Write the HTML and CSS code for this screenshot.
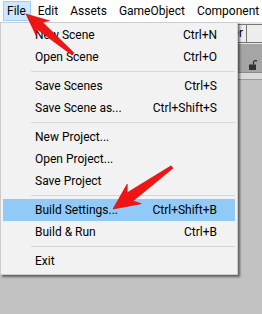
FILE: index.html
```html
<!DOCTYPE html>
<html lang="en">
<head>
    <meta charset="UTF-8">
    <meta name="viewport" content="width=device-width, initial-scale=1.0">
    <title>File Menu</title>
    <link rel="stylesheet" href="styles.css">
</head>
<body>
    <div id="editor">
        <div class="menubar">
            <span class="menubar-item active">File</span>
            <span class="menubar-item">Edit</span>
            <span class="menubar-item">Assets</span>
            <span class="menubar-item">GameObject</span>
            <span class="menubar-item">Component</span>
        </div>

        <div class="toolbar">
            <span class="tool-button">Center</span>
            <span class="tool-button empty"></span>
        </div>

        <div class="panel-tabs">
            <svg class="lock" width="8" height="10" viewBox="0 0 8 10">
                <path d="M4.5 4.5V2.5a2 2 0 0 1 3.5-1.3" fill="none" stroke="#333" stroke-width="1.3"/>
                <rect x="0" y="4.5" width="7" height="5.5" fill="#333"/>
            </svg>
        </div>
        <div class="panel-toolbar"></div>
        <div class="panel-body"></div>
    </div>

    <!-- the open File menu -->
    <div class="menu">
        <div class="menu-item"><span>New Scene</span><span class="shortcut">Ctrl+N</span></div>
        <div class="menu-item"><span>Open Scene</span><span class="shortcut">Ctrl+O</span></div>
        <div class="separator"></div>
        <div class="menu-item"><span>Save Scenes</span><span class="shortcut">Ctrl+S</span></div>
        <div class="menu-item"><span>Save Scene as...</span><span class="shortcut">Ctrl+Shift+S</span></div>
        <div class="separator"></div>
        <div class="menu-item"><span>New Project...</span></div>
        <div class="menu-item"><span>Open Project...</span></div>
        <div class="menu-item"><span>Save Project</span></div>
        <div class="separator"></div>
        <div class="menu-item hover"><span>Build Settings...</span><span class="shortcut">Ctrl+Shift+B</span></div>
        <div class="menu-item"><span>Build &amp; Run</span><span class="shortcut">Ctrl+B</span></div>
        <div class="separator"></div>
        <div class="menu-item"><span>Exit</span></div>
    </div>

    <!-- red annotation arrows -->
    <svg class="arrows" width="262" height="314" viewBox="0 0 262 314">
        <polygon points="26,14 49.3,20.7 42.6,22.3 74,52.9 72,55.1 36.8,29.1 36.3,35.9"/>
        <polygon points="113,209 141.2,203.7 133,200.9 172.9,168.2 171.1,165.8 127.2,192.7 127.2,184.1"/>
    </svg>
</body>
</html>
```

FILE: styles.css
```css
body {
    margin: 0;
    padding: 0;
    width: 262px;
    height: 314px;
    overflow: hidden;
    background: #c2c2c2;
    font-family: Roboto, sans-serif;
    font-size: 12px;
    color: #000;
    position: relative;
}

#editor {
    display: flex;
    flex-direction: column;
}

.menubar {
    height: 22px;
    background: #fff;
    display: flex;
    align-items: center;
    padding-left: 3px;
    white-space: nowrap;
}

.menubar-item {
    height: 18px;
    line-height: 18px;
    padding: 0 4px 0 3px;
    margin-right: 3px;
    border: 1px solid transparent;
}

.menubar-item.active {
    background: #cce8ff;
    border-color: #99d1ff;
}

.toolbar {
    height: 22px;
    background: #e6e6e6;
    display: flex;
    align-items: flex-end;
    padding-left: 200px;
}

.tool-button {
    height: 17px;
    line-height: 17px;
    width: 42px;
    padding-right: 3px;
    text-align: right;
    background: #ededed;
    border: 1px solid #777;
    font-size: 12px;
    margin-bottom: 1px;
    flex-shrink: 0;
}

.tool-button.empty {
    border-left: none;
}

.panel-tabs {
    height: 28px;
    background: #a5a5a5;
    display: flex;
    justify-content: flex-end;
    align-items: flex-end;
    padding-right: 5px;
    box-sizing: border-box;
    padding-bottom: 2px;
}

.panel-toolbar {
    height: 6px;
    background: #dadada;
    border-top: 1px solid #8a8a8a;
    border-bottom: 1px solid #9a9a9a;
}

.panel-body {
    flex: 1;
}

/* the dropdown that lies over the editor */
.menu {
    position: absolute;
    left: 0;
    top: 22px;
    width: 232px;
    padding: 1px 2px 2px 2px;
    background: #f2f2f2;
    border: 1px solid #cccccc;
    box-shadow: 2px 2px 2px rgba(0, 0, 0, 0.5);
}

.menu-item {
    height: 22px;
    display: flex;
    align-items: center;
    justify-content: space-between;
    padding: 0 18px 0 32px;
}

.menu-item.hover {
    background: #91c9f7;
}

.separator {
    height: 1px;
    background: #d7d7d7;
    margin: 3px 0 3px 28px;
}

.arrows {
    position: absolute;
    left: 0;
    top: 0;
}

.arrows polygon {
    fill: #f01414;
    stroke: #d80000;
    stroke-width: 0.6;
    stroke-linejoin: round;
}
```
